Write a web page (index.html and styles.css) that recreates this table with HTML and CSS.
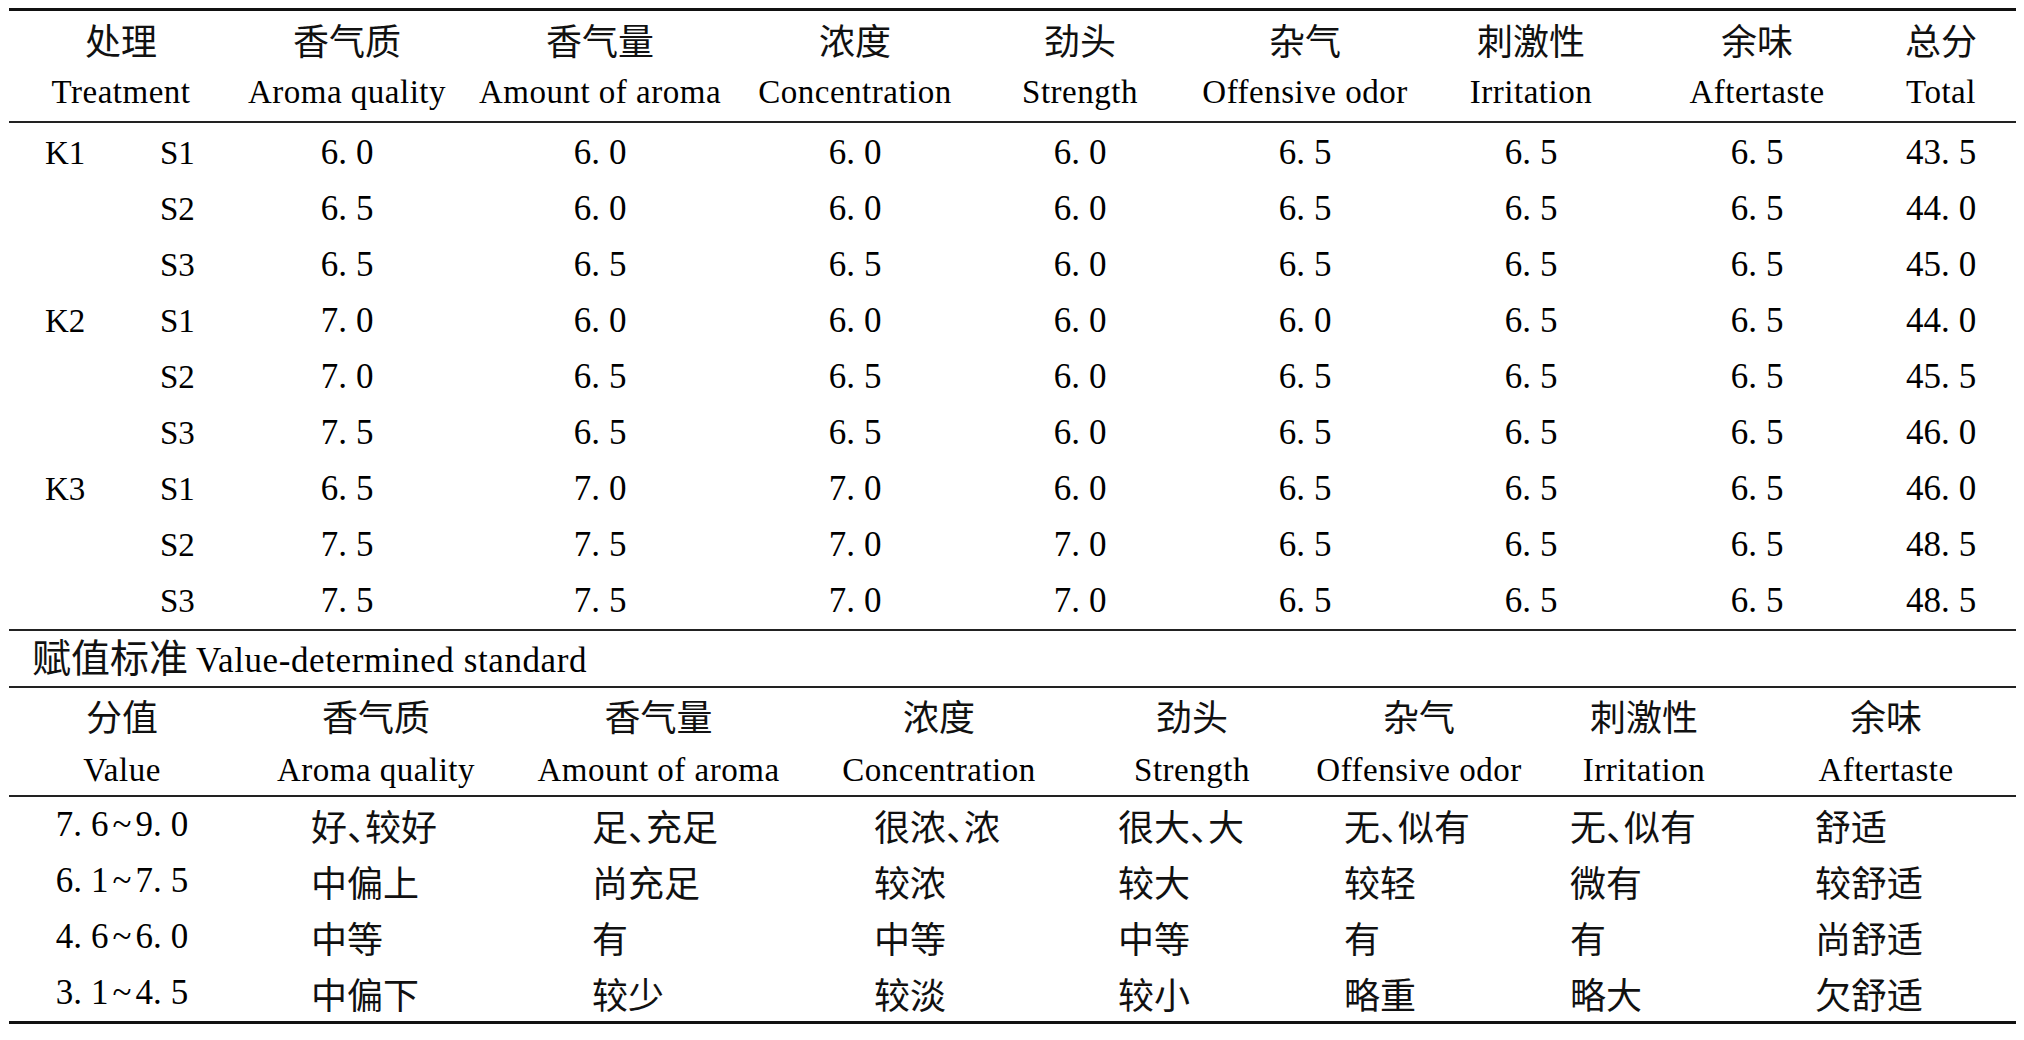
FILE: index.html
```html
<!DOCTYPE html>
<html lang="zh">
<head>
<meta charset="utf-8">
<title>感官评价</title>
<link rel="stylesheet" href="styles.css">
</head>
<body>
<div class="page">
  <div class="tbl top">
    <div class="row head">
      <div class="th span2"><span class="zh">处理</span><span class="en">Treatment</span></div>
      <div class="th"><span class="zh">香气质</span><span class="en">Aroma quality</span></div>
      <div class="th"><span class="zh">香气量</span><span class="en">Amount of aroma</span></div>
      <div class="th"><span class="zh">浓度</span><span class="en">Concentration</span></div>
      <div class="th"><span class="zh">劲头</span><span class="en">Strength</span></div>
      <div class="th"><span class="zh">杂气</span><span class="en">Offensive odor</span></div>
      <div class="th"><span class="zh">刺激性</span><span class="en">Irritation</span></div>
      <div class="th"><span class="zh">余味</span><span class="en">Aftertaste</span></div>
      <div class="th tot"><span class="zh">总分</span><span class="en">Total</span></div>
    </div>
    <div class="tbody">
      <div class="row"><div class="k">K1</div><div class="s">S1</div><div class="n">6<span class="p">.</span>0</div><div class="n">6<span class="p">.</span>0</div><div class="n">6<span class="p">.</span>0</div><div class="n">6<span class="p">.</span>0</div><div class="n">6<span class="p">.</span>5</div><div class="n">6<span class="p">.</span>5</div><div class="n">6<span class="p">.</span>5</div><div class="n tot">43<span class="p">.</span>5</div></div>
      <div class="row"><div class="k"></div><div class="s">S2</div><div class="n">6<span class="p">.</span>5</div><div class="n">6<span class="p">.</span>0</div><div class="n">6<span class="p">.</span>0</div><div class="n">6<span class="p">.</span>0</div><div class="n">6<span class="p">.</span>5</div><div class="n">6<span class="p">.</span>5</div><div class="n">6<span class="p">.</span>5</div><div class="n tot">44<span class="p">.</span>0</div></div>
      <div class="row"><div class="k"></div><div class="s">S3</div><div class="n">6<span class="p">.</span>5</div><div class="n">6<span class="p">.</span>5</div><div class="n">6<span class="p">.</span>5</div><div class="n">6<span class="p">.</span>0</div><div class="n">6<span class="p">.</span>5</div><div class="n">6<span class="p">.</span>5</div><div class="n">6<span class="p">.</span>5</div><div class="n tot">45<span class="p">.</span>0</div></div>
      <div class="row"><div class="k">K2</div><div class="s">S1</div><div class="n">7<span class="p">.</span>0</div><div class="n">6<span class="p">.</span>0</div><div class="n">6<span class="p">.</span>0</div><div class="n">6<span class="p">.</span>0</div><div class="n">6<span class="p">.</span>0</div><div class="n">6<span class="p">.</span>5</div><div class="n">6<span class="p">.</span>5</div><div class="n tot">44<span class="p">.</span>0</div></div>
      <div class="row"><div class="k"></div><div class="s">S2</div><div class="n">7<span class="p">.</span>0</div><div class="n">6<span class="p">.</span>5</div><div class="n">6<span class="p">.</span>5</div><div class="n">6<span class="p">.</span>0</div><div class="n">6<span class="p">.</span>5</div><div class="n">6<span class="p">.</span>5</div><div class="n">6<span class="p">.</span>5</div><div class="n tot">45<span class="p">.</span>5</div></div>
      <div class="row"><div class="k"></div><div class="s">S3</div><div class="n">7<span class="p">.</span>5</div><div class="n">6<span class="p">.</span>5</div><div class="n">6<span class="p">.</span>5</div><div class="n">6<span class="p">.</span>0</div><div class="n">6<span class="p">.</span>5</div><div class="n">6<span class="p">.</span>5</div><div class="n">6<span class="p">.</span>5</div><div class="n tot">46<span class="p">.</span>0</div></div>
      <div class="row"><div class="k">K3</div><div class="s">S1</div><div class="n">6<span class="p">.</span>5</div><div class="n">7<span class="p">.</span>0</div><div class="n">7<span class="p">.</span>0</div><div class="n">6<span class="p">.</span>0</div><div class="n">6<span class="p">.</span>5</div><div class="n">6<span class="p">.</span>5</div><div class="n">6<span class="p">.</span>5</div><div class="n tot">46<span class="p">.</span>0</div></div>
      <div class="row"><div class="k"></div><div class="s">S2</div><div class="n">7<span class="p">.</span>5</div><div class="n">7<span class="p">.</span>5</div><div class="n">7<span class="p">.</span>0</div><div class="n">7<span class="p">.</span>0</div><div class="n">6<span class="p">.</span>5</div><div class="n">6<span class="p">.</span>5</div><div class="n">6<span class="p">.</span>5</div><div class="n tot">48<span class="p">.</span>5</div></div>
      <div class="row"><div class="k"></div><div class="s">S3</div><div class="n">7<span class="p">.</span>5</div><div class="n">7<span class="p">.</span>5</div><div class="n">7<span class="p">.</span>0</div><div class="n">7<span class="p">.</span>0</div><div class="n">6<span class="p">.</span>5</div><div class="n">6<span class="p">.</span>5</div><div class="n">6<span class="p">.</span>5</div><div class="n tot">48<span class="p">.</span>5</div></div>
    </div>
  </div>

  <div class="std"><span class="zh">赋值标准</span> <span class="en">Value-determined standard</span></div>

  <div class="tbl bottom">
    <div class="row head">
      <div class="th"><span class="zh">分值</span><span class="en">Value</span></div>
      <div class="th"><span class="zh">香气质</span><span class="en">Aroma quality</span></div>
      <div class="th"><span class="zh">香气量</span><span class="en">Amount of aroma</span></div>
      <div class="th"><span class="zh">浓度</span><span class="en">Concentration</span></div>
      <div class="th"><span class="zh">劲头</span><span class="en">Strength</span></div>
      <div class="th"><span class="zh">杂气</span><span class="en">Offensive odor</span></div>
      <div class="th"><span class="zh">刺激性</span><span class="en">Irritation</span></div>
      <div class="th"><span class="zh">余味</span><span class="en">Aftertaste</span></div>
    </div>
    <div class="tbody">
      <div class="row"><div class="v">7<span class="p">.</span>6<span class="t">~</span>9<span class="p">.</span>0</div><div class="d">好、较好</div><div class="d">足、充足</div><div class="d">很浓、浓</div><div class="d">很大、大</div><div class="d">无、似有</div><div class="d">无、似有</div><div class="d">舒适</div></div>
      <div class="row"><div class="v">6<span class="p">.</span>1<span class="t">~</span>7<span class="p">.</span>5</div><div class="d">中偏上</div><div class="d">尚充足</div><div class="d">较浓</div><div class="d">较大</div><div class="d">较轻</div><div class="d">微有</div><div class="d">较舒适</div></div>
      <div class="row"><div class="v">4<span class="p">.</span>6<span class="t">~</span>6<span class="p">.</span>0</div><div class="d">中等</div><div class="d">有</div><div class="d">中等</div><div class="d">中等</div><div class="d">有</div><div class="d">有</div><div class="d">尚舒适</div></div>
      <div class="row"><div class="v">3<span class="p">.</span>1<span class="t">~</span>4<span class="p">.</span>5</div><div class="d">中偏下</div><div class="d">较少</div><div class="d">较淡</div><div class="d">较小</div><div class="d">略重</div><div class="d">略大</div><div class="d">欠舒适</div></div>
    </div>
  </div>
</div>
</body>
</html>
```

FILE: styles.css
```css
html, body {
  margin: 0;
  padding: 0;
  background: #ffffff;
}

body {
  color: #000000;
  font-family: "Liberation Serif", "Noto Sans CJK SC", serif;
}

.page {
  width: 2007px;
  margin-left: 9px;
  padding-top: 8px;
}

.zh {
  font-family: "Noto Sans CJK SC", sans-serif;
  font-size: 36px;
  font-feature-settings: "halt";
  color: #111111;
}

.en {
  font-family: "Liberation Serif", serif;
  font-size: 33px;
  letter-spacing: 0.5px;
}

/* ---------- top table ---------- */
.top {
  border-top: 3px solid #111;
}

.top .row {
  display: grid;
  grid-template-columns: 151px 73px 228px 278px 232px 218px 232px 220px 232px 143px;
}

.head {
  border-bottom: 2px solid #222;
}

.top .head {
  height: 110px;
}

.th {
  display: flex;
  flex-direction: column;
  align-items: center;
  padding-top: 6px;
}

.th .zh {
  line-height: 44px;
  height: 44px;
}

.th .en {
  line-height: 40px;
  margin-top: 11px;
}

.span2 {
  grid-column: span 2;
}

.top .tot {
  padding-right: 7px;
}

.top .tbody {
  padding-top: 2px;
  border-bottom: 2px solid #222;
}

.top .tbody .row {
  height: 56px;
  line-height: 56px;
}

.k, .s {
  font-size: 33px;
}

.k {
  padding-left: 36px;
}

.n {
  text-align: center;
  font-size: 35px;
}

.p {
  margin-right: 9px;
}

.t {
  margin: 0 4px;
}

/* ---------- standard line ---------- */
.std {
  height: 48px;
  line-height: 48px;
  padding-bottom: 7px;
  padding-left: 23px;
  border-bottom: 2px solid #222;
  white-space: nowrap;
}

.std .zh {
  font-size: 39px;
}

.std .en {
  font-size: 35px;
  letter-spacing: 0.6px;
  margin-left: 4px;
}

/* ---------- bottom table ---------- */
.bottom .row {
  display: grid;
  grid-template-columns: 226px 282px 283px 278px 228px 226px 224px 260px;
}

.bottom .head {
  height: 107px;
}

.bottom .th {
  padding-top: 5px;
}

.bottom .th .en {
  line-height: 50px;
  margin-top: 8px;
}

.bottom .tbody {
  border-bottom: 3px solid #111;
}

.bottom .tbody .row {
  height: 56px;
  line-height: 56px;
}

.v {
  text-align: center;
  font-size: 35px;
}

.d {
  font-family: "Noto Sans CJK SC", sans-serif;
  font-size: 36px;
  font-feature-settings: "halt";
  color: #111111;
}

.bottom .d:nth-child(2) { padding-left: 76px; }
.bottom .d:nth-child(3) { padding-left: 75px; }
.bottom .d:nth-child(4) { padding-left: 74px; }
.bottom .d:nth-child(5) { padding-left: 40px; }
.bottom .d:nth-child(6) { padding-left: 38px; }
.bottom .d:nth-child(7) { padding-left: 38px; }
.bottom .d:nth-child(8) { padding-left: 59px; }
```
